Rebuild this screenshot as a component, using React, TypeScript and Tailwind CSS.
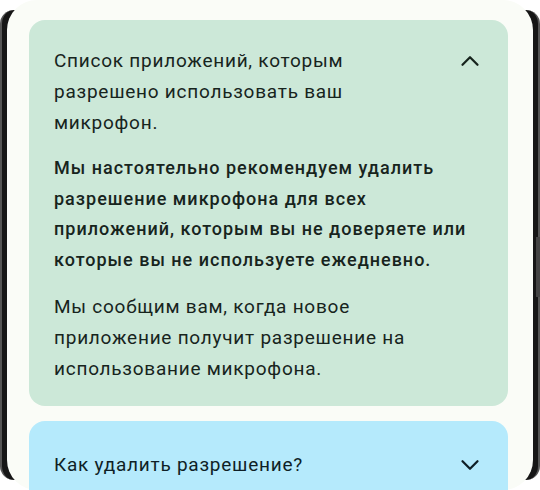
import { ChevronUp, ChevronDown } from "lucide-react"

export default function App() {
  return (
    <div className="relative w-[540px] h-[490px] bg-white overflow-hidden" style={{ fontFamily: "Roboto, 'Noto Sans', sans-serif" }}>
      {/* phone bezel behind the screen */}
      <div className="absolute left-0 right-0 top-[10px] bottom-[10px] rounded-[14px] bg-[#161616] border-x-[2px] border-[#555]" />
      <div className="absolute right-0 top-[237px] h-[60px] w-[4px] bg-[#444]" />

      <div className="relative mx-[7px] h-full rounded-[30px] bg-[#fafcf7] pl-[22px] pr-[25px] pt-[20px] flex flex-col gap-[15px]">
        <div className="rounded-[16px] bg-[#cce8d8] pl-[25px] pr-[23px] pt-[25px] pb-[22px] text-[#17241d]">
          <div className="flex justify-between">
            <p className="text-[19px] leading-[31px] tracking-[0.75px] w-[340px]">
              Список приложений, которым разрешено использовать ваш микрофон.
            </p>
            <ChevronUp className="mt-[1px] w-[30px] h-[30px] shrink-0" strokeWidth={1.8} />
          </div>
          <p className="mt-[15px] text-[18px] leading-[30.5px] font-medium tracking-[1px] w-[418px]">
            Мы настоятельно рекомендуем удалить разрешение микрофона для всех приложений, которым вы не доверяете или которые вы не используете ежедневно.
          </p>
          <p className="mt-[16px] text-[19px] leading-[31px] tracking-[0.75px] w-[400px]">
            Мы сообщим вам, когда новое приложение получит разрешение на использование микрофона.
          </p>
        </div>

        <div className="rounded-[16px] bg-[#b5eafc] pl-[25px] pr-[23px] pt-[28px] pb-[28px] text-[#0f1f26]">
          <div className="flex justify-between items-center">
            <p className="text-[19px] leading-[31px] tracking-[0.75px]">Как удалить разрешение?</p>
            <ChevronDown className="w-[30px] h-[30px] shrink-0" strokeWidth={1.8} />
          </div>
        </div>
      </div>
    </div>
  )
}
